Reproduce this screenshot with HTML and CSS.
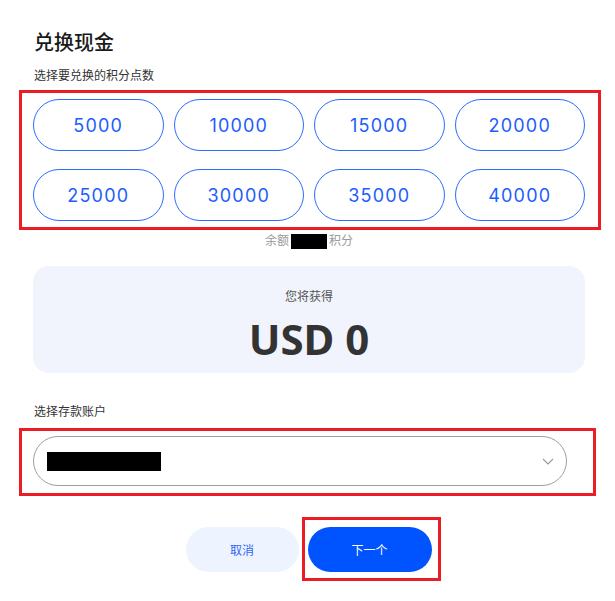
FILE: index.html
```html
<!DOCTYPE html>
<html lang="zh-CN">
<head>
    <meta charset="UTF-8">
    <title>兑换现金</title>
    <link rel="stylesheet" href="styles.css">
</head>
<body>
    <div class="redeem">
        <h1 class="redeem-title">兑换现金</h1>
        <div class="field-label">选择要兑换的积分点数</div>

        <div class="mark mark-points">
            <div class="points-grid">
                <button class="point-btn">5000</button>
                <button class="point-btn">10000</button>
                <button class="point-btn">15000</button>
                <button class="point-btn">20000</button>
                <button class="point-btn">25000</button>
                <button class="point-btn">30000</button>
                <button class="point-btn">35000</button>
                <button class="point-btn">40000</button>
            </div>
        </div>

        <div class="balance">余额 <span class="masked"></span> 积分</div>

        <div class="result-card">
            <div class="result-label">您将获得</div>
            <div class="result-amount">USD 0</div>
        </div>

        <div class="field-label account-label">选择存款账户</div>

        <div class="mark mark-account">
            <div class="account-select">
                <span class="masked masked-account"></span>
                <svg class="chevron" width="12" height="7" viewBox="0 0 12 7">
                    <path d="M1 1l5 5 5-5" fill="none" stroke="#9a9a9a" stroke-width="1.2"/>
                </svg>
            </div>
        </div>

        <div class="actions">
            <button class="btn btn-cancel">取消</button>
            <div class="mark mark-next">
                <button class="btn btn-next">下一个</button>
            </div>
        </div>
    </div>
</body>
</html>
```

FILE: styles.css
```css
* {
    box-sizing: border-box;
}

body {
    margin: 0;
    background-color: #fff;
    font-family: "Noto Sans", "Noto Sans CJK SC", sans-serif;
    color: #222;
}

.redeem {
    width: 552px;
    margin-left: 33px;
    padding-top: 31px;
}

.redeem-title {
    margin: 0 0 0 1px;
    font-size: 20px;
    line-height: 24px;
    font-weight: 500;
    color: #1a1a1a;
}

.field-label {
    margin: 13px 0 0 1px;
    font-size: 12px;
    line-height: 16px;
    color: #333;
}

/* cajas rojas de resaltado */
.mark {
    border: 3px solid #ec1c24;
}

.mark-points {
    margin: 6px -16px 0 -14px;
    padding: 6px 13px 6px 11px;
}

.points-grid {
    display: grid;
    grid-template-columns: repeat(4, 1fr);
    column-gap: 10px;
    row-gap: 18px;
}

.point-btn {
    height: 52px;
    border: 1px solid #2e6cff;
    border-radius: 26px;
    background-color: #fff;
    color: #1d5cff;
    font-family: Inter, "Noto Sans", sans-serif;
    font-size: 18px;
    letter-spacing: 1.2px;
    cursor: pointer;
}

.balance {
    margin-top: 3px;
    text-align: center;
    font-size: 12px;
    line-height: 16px;
    color: #9a9a9a;
    display: flex;
    justify-content: center;
    align-items: center;
    gap: 2px;
}

.masked {
    display: inline-block;
    width: 36px;
    height: 15px;
    background-color: #000;
}

.result-card {
    margin-top: 17px;
    padding: 23px 0 13px;
    background-color: #f1f4fc;
    border-radius: 16px;
    text-align: center;
}

.result-label {
    font-size: 12px;
    line-height: 16px;
    color: #555;
}

.result-amount {
    margin-top: 13px;
    font-size: 42px;
    line-height: 42px;
    font-weight: 700;
    color: #333;
}

.account-label {
    margin-top: 31px;
}

.mark-account {
    margin: 8px -11px 0 -14px;
    padding: 5px 26px 7px 11px;
}

.account-select {
    height: 50px;
    border: 1px solid #9e9e9e;
    border-radius: 25px;
    display: flex;
    align-items: center;
    justify-content: space-between;
    padding: 0 12px 0 13px;
}

.masked-account {
    width: 114px;
    height: 19px;
}

.actions {
    margin-top: 21px;
    display: flex;
    justify-content: center;
    align-items: center;
    padding-left: 8px;
}

.btn {
    height: 45px;
    border: none;
    border-radius: 23px;
    font-family: "Noto Sans CJK SC", sans-serif;
    font-size: 12px;
    cursor: pointer;
}

.btn-cancel {
    width: 113px;
    margin-right: 3px;
    margin-top: 1px;
    background-color: #eef4ff;
    color: #2d66f5;
}

.mark-next {
    padding: 7px 6px 6px 3px;
}

.btn-next {
    display: block;
    width: 124px;
    background-color: #0054ff;
    color: #fff;
}
```
